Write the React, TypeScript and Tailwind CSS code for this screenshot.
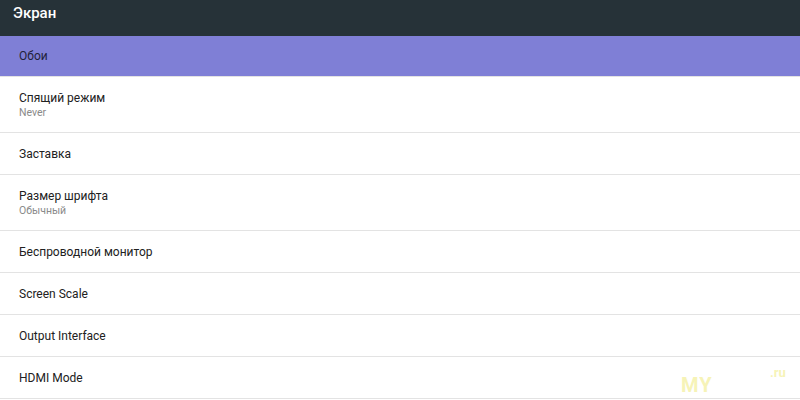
const items: { title: string; subtitle?: string }[] = [
  { title: 'Спящий режим', subtitle: 'Never' },
  { title: 'Заставка' },
  { title: 'Размер шрифта', subtitle: 'Обычный' },
  { title: 'Беспроводной монитор' },
  { title: 'Screen Scale' },
  { title: 'Output Interface' },
  { title: 'HDMI Mode' },
];

const App = () => {
  return (
    <div className="relative w-[800px] h-[400px] overflow-hidden bg-white font-['Roboto',sans-serif]">
      {/* Toolbar */}
      <header className="h-[36px] bg-[#263238] flex items-center px-[13px] shadow-[0_1px_2px_rgba(0,0,0,0.3)]">
        <h1 className="text-white text-[15px] font-medium leading-none -mt-[9px]">Экран</h1>
      </header>

      {/* Selected item */}
      <div className="h-[40px] bg-[#7f7fd6] flex items-center px-[19px]">
        <span className="text-[12px] text-[#1f1f3a]">Обои</span>
      </div>

      {/* Settings list */}
      <ul>
        {items.map((item) => (
          <li
            key={item.title}
            className={`border-t border-[#e3e3e3] flex flex-col justify-center px-[19px] ${
              item.subtitle ? 'h-[56px]' : 'h-[42px]'
            }`}
          >
            <span className="text-[12px] leading-[16px] text-[#212121]">{item.title}</span>
            {item.subtitle && (
              <span className="text-[10.5px] leading-[14px] text-[#8a8a8a]">{item.subtitle}</span>
            )}
          </li>
        ))}
        <li className="border-t border-[#e3e3e3]" />
      </ul>

      {/* Watermark */}
      <span className="absolute left-[681px] top-[370px] text-[20px] font-bold text-[#f3ef9a] opacity-70 tracking-wider">
        MY
      </span>
      <span className="absolute left-[770px] top-[363px] text-[13px] font-bold text-[#f3ef9a] opacity-70">
        .ru
      </span>
    </div>
  );
};

export default App;
